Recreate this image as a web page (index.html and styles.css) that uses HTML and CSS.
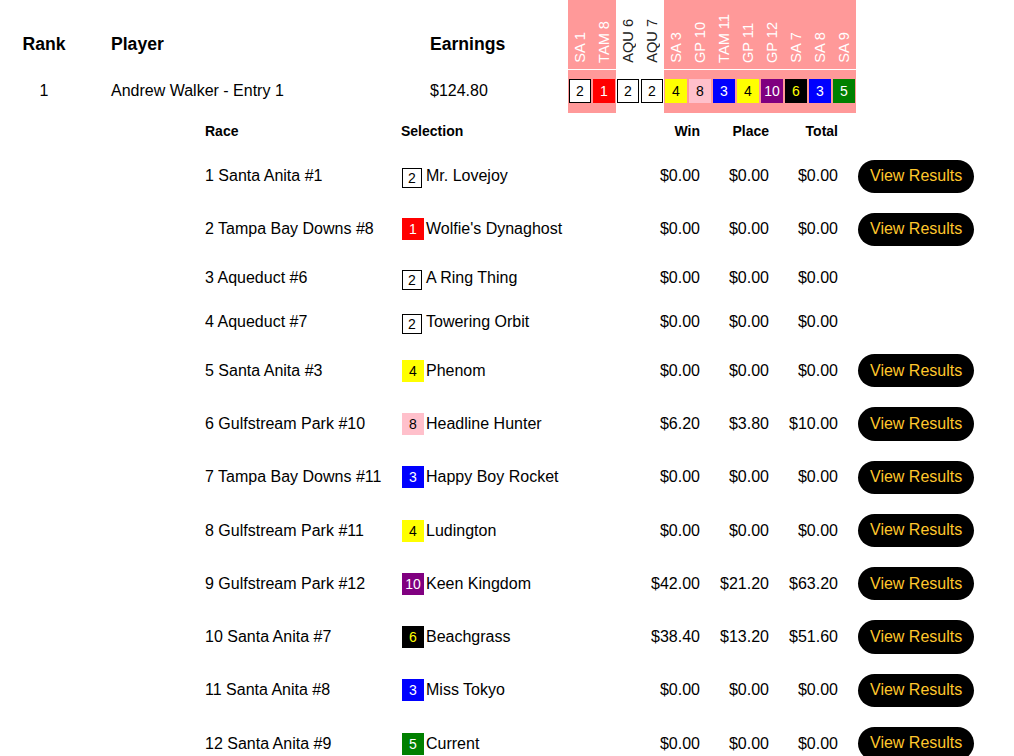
FILE: index.html
```html
<!DOCTYPE html>
<html>
<head>
<meta charset="utf-8">
<link rel="stylesheet" href="styles.css">
</head>
<body>
<div class="board">
  <div class="th rank">Rank</div>
  <div class="th player">Player</div>
  <div class="th earn">Earnings</div>
  <div class="vh pk"><span>SA 1</span></div>
  <div class="vh pk"><span>TAM 8</span></div>
  <div class="vh wh"><span>AQU 6</span></div>
  <div class="vh wh"><span>AQU 7</span></div>
  <div class="vh pk"><span>SA 3</span></div>
  <div class="vh pk"><span>GP 10</span></div>
  <div class="vh pk"><span>TAM 11</span></div>
  <div class="vh pk"><span>GP 11</span></div>
  <div class="vh pk"><span>GP 12</span></div>
  <div class="vh pk"><span>SA 7</span></div>
  <div class="vh pk"><span>SA 8</span></div>
  <div class="vh pk"><span>SA 9</span></div>

  <div class="td rank">1</div>
  <div class="td player">Andrew Walker - Entry 1</div>
  <div class="td earn">$124.80</div>
  <div class="pc pk"><span class="hb b-white">2</span></div>
  <div class="pc pk"><span class="hb b-red">1</span></div>
  <div class="pc wh"><span class="hb b-white">2</span></div>
  <div class="pc wh"><span class="hb b-white">2</span></div>
  <div class="pc pk"><span class="hb b-yellow">4</span></div>
  <div class="pc pk"><span class="hb b-pink">8</span></div>
  <div class="pc pk"><span class="hb b-blue">3</span></div>
  <div class="pc pk"><span class="hb b-yellow">4</span></div>
  <div class="pc pk"><span class="hb b-purple">10</span></div>
  <div class="pc pk"><span class="hb b-black">6</span></div>
  <div class="pc pk"><span class="hb b-blue">3</span></div>
  <div class="pc pk"><span class="hb b-green">5</span></div>
</div>

<div class="details">
  <div class="drow dhead">
    <div class="dc">Race</div>
    <div class="dc">Selection</div>
    <div class="dc num">Win</div>
    <div class="dc num">Place</div>
    <div class="dc num">Total</div>
    <div class="dc"></div>
  </div>

  <div class="drow">
    <div class="dc">1 Santa Anita #1</div>
    <div class="dc sel"><span class="slot"><span class="sb b-white">2</span></span>Mr. Lovejoy</div>
    <div class="dc num">$0.00</div><div class="dc num">$0.00</div><div class="dc num">$0.00</div>
    <div class="dc"><span class="btn">View Results</span></div>
  </div>
  <div class="drow">
    <div class="dc">2 Tampa Bay Downs #8</div>
    <div class="dc sel"><span class="slot"><span class="sb b-red">1</span></span>Wolfie's Dynaghost</div>
    <div class="dc num">$0.00</div><div class="dc num">$0.00</div><div class="dc num">$0.00</div>
    <div class="dc"><span class="btn">View Results</span></div>
  </div>
  <div class="drow">
    <div class="dc">3 Aqueduct #6</div>
    <div class="dc sel"><span class="slot"><span class="sb b-white">2</span></span>A Ring Thing</div>
    <div class="dc num">$0.00</div><div class="dc num">$0.00</div><div class="dc num">$0.00</div>
    <div class="dc"></div>
  </div>
  <div class="drow">
    <div class="dc">4 Aqueduct #7</div>
    <div class="dc sel"><span class="slot"><span class="sb b-white">2</span></span>Towering Orbit</div>
    <div class="dc num">$0.00</div><div class="dc num">$0.00</div><div class="dc num">$0.00</div>
    <div class="dc"></div>
  </div>
  <div class="drow">
    <div class="dc">5 Santa Anita #3</div>
    <div class="dc sel"><span class="slot"><span class="sb b-yellow">4</span></span>Phenom</div>
    <div class="dc num">$0.00</div><div class="dc num">$0.00</div><div class="dc num">$0.00</div>
    <div class="dc"><span class="btn">View Results</span></div>
  </div>
  <div class="drow">
    <div class="dc">6 Gulfstream Park #10</div>
    <div class="dc sel"><span class="slot"><span class="sb b-pink">8</span></span>Headline Hunter</div>
    <div class="dc num">$6.20</div><div class="dc num">$3.80</div><div class="dc num">$10.00</div>
    <div class="dc"><span class="btn">View Results</span></div>
  </div>
  <div class="drow">
    <div class="dc">7 Tampa Bay Downs #11</div>
    <div class="dc sel"><span class="slot"><span class="sb b-blue">3</span></span>Happy Boy Rocket</div>
    <div class="dc num">$0.00</div><div class="dc num">$0.00</div><div class="dc num">$0.00</div>
    <div class="dc"><span class="btn">View Results</span></div>
  </div>
  <div class="drow">
    <div class="dc">8 Gulfstream Park #11</div>
    <div class="dc sel"><span class="slot"><span class="sb b-yellow">4</span></span>Ludington</div>
    <div class="dc num">$0.00</div><div class="dc num">$0.00</div><div class="dc num">$0.00</div>
    <div class="dc"><span class="btn">View Results</span></div>
  </div>
  <div class="drow">
    <div class="dc">9 Gulfstream Park #12</div>
    <div class="dc sel"><span class="slot"><span class="sb b-purple">10</span></span>Keen Kingdom</div>
    <div class="dc num">$42.00</div><div class="dc num">$21.20</div><div class="dc num">$63.20</div>
    <div class="dc"><span class="btn">View Results</span></div>
  </div>
  <div class="drow">
    <div class="dc">10 Santa Anita #7</div>
    <div class="dc sel"><span class="slot"><span class="sb b-black">6</span></span>Beachgrass</div>
    <div class="dc num">$38.40</div><div class="dc num">$13.20</div><div class="dc num">$51.60</div>
    <div class="dc"><span class="btn">View Results</span></div>
  </div>
  <div class="drow">
    <div class="dc">11 Santa Anita #8</div>
    <div class="dc sel"><span class="slot"><span class="sb b-blue">3</span></span>Miss Tokyo</div>
    <div class="dc num">$0.00</div><div class="dc num">$0.00</div><div class="dc num">$0.00</div>
    <div class="dc"><span class="btn">View Results</span></div>
  </div>
  <div class="drow">
    <div class="dc">12 Santa Anita #9</div>
    <div class="dc sel"><span class="slot"><span class="sb b-green">5</span></span>Current</div>
    <div class="dc num">$0.00</div><div class="dc num">$0.00</div><div class="dc num">$0.00</div>
    <div class="dc"><span class="btn">View Results</span></div>
  </div>
</div>
</body>
</html>
```

FILE: styles.css
```css
html, body {
  margin: 0;
  padding: 0;
  background: #fff;
}
body {
  font-family: "Liberation Sans", Arial, Helvetica, sans-serif;
  font-size: 16px;
  color: #000;
}

.board {
  display: grid;
  grid-template-columns: 72px 350px 138px repeat(12, 24px);
  grid-template-rows: 69px 43px;
  row-gap: 1px;
  padding-left: 8px;
}

.th {
  font-weight: bold;
  font-size: 17.6px;
  align-self: end;
  padding-bottom: 14px;
}
.td {
  align-self: center;
  padding-bottom: 2px;
}
.rank { text-align: center; }
.player { padding-left: 31px; }

.pk { background: #ff9999; }
.wh { background: #fff; }

.vh {
  display: flex;
  justify-content: center;
  align-items: flex-end;
  padding-bottom: 6px;
  box-sizing: border-box;
}
.vh span {
  writing-mode: vertical-rl;
  transform: rotate(180deg);
  font-size: 14.6px;
  line-height: 16px;
  white-space: nowrap;
}
.vh.pk span { color: #fff; }
.vh.wh span { color: #222; }

.pc {
  display: flex;
  justify-content: center;
  align-items: center;
  padding-bottom: 1px;
}
.hb {
  display: flex;
  align-items: center;
  justify-content: center;
  width: 22px;
  height: 24px;
  box-sizing: border-box;
  font-size: 14px;
}

.b-white { background: #fff; color: #000; border: 1px solid #000; }
.b-red { background: #ff0000; color: #fff; }
.b-yellow { background: #ffff00; color: #000; }
.b-pink { background: #ffc0cb; color: #000; }
.b-blue { background: #0000ff; color: #fff; }
.b-purple { background: #800080; color: #fff; }
.b-black { background: #000; color: #ffff00; }
.b-green { background: #008000; color: #fff; }

.details {
  margin-left: 195px;
  width: 790px;
}
.drow {
  display: grid;
  grid-template-columns: 196px 250px 69px 69px 69px 137px;
  align-items: center;
}
.dhead {
  height: 36.5px;
  font-weight: bold;
  font-size: 14px;
}
.dc {
  padding: 10px 10px;
  white-space: nowrap;
}
.dhead .dc { padding: 0 10px; }
.num { text-align: right; }

.sel {
  display: flex;
  align-items: center;
}
.slot {
  display: flex;
  align-items: center;
  width: 24px;
  height: 24px;
  flex: none;
  margin-left: 1px;
}
.sb {
  display: flex;
  align-items: center;
  justify-content: center;
  width: 22px;
  height: 22px;
  box-sizing: border-box;
  font-size: 14px;
}
.sb.b-white {
  width: 20px;
  height: 20px;
  margin-top: 3px;
}

.btn {
  display: inline-block;
  background: #000;
  color: #ffc72c;
  border-radius: 17px;
  padding: 7.45px 12px;
  font-size: 16px;
  line-height: 18.4px;
  white-space: nowrap;
}
```
